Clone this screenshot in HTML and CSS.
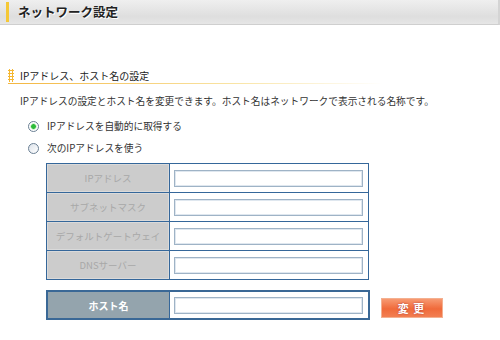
FILE: index.html
```html
<!doctype html>
<html lang="ja">
<head>
    <meta charset="UTF-8">
    <title>ネットワーク設定</title>
    <link rel="stylesheet" href="styles.css">
</head>
<body>
    <div class="page-header">
        <h1 class="page-title">ネットワーク設定</h1>
    </div>

    <div class="content">
        <h2 class="section-title"><span class="dots"></span>IPアドレス、ホスト名の設定</h2>
        <p class="desc">IPアドレスの設定とホスト名を変更できます。ホスト名はネットワークで表示される名称です。</p>

        <div class="radios">
            <label class="radio-row"><input type="radio" name="mode" checked> IPアドレスを自動的に取得する</label>
            <label class="radio-row"><input type="radio" name="mode"> 次のIPアドレスを使う</label>
        </div>

        <table class="ip-table">
            <tr><th>IPアドレス</th><td><input type="text" class="field"></td></tr>
            <tr><th>サブネットマスク</th><td><input type="text" class="field"></td></tr>
            <tr><th>デフォルトゲートウェイ</th><td><input type="text" class="field"></td></tr>
            <tr><th>DNSサーバー</th><td><input type="text" class="field"></td></tr>
        </table>

        <div class="host-row">
            <table class="host-table">
                <tr><th>ホスト名</th><td><input type="text" class="field"></td></tr>
            </table>
            <button type="button" class="change-btn">変 更</button>
        </div>
    </div>
</body>
</html>
```

FILE: styles.css
```css
body {
    margin: 0;
    width: 500px;
    font-family: "Noto Sans CJK JP", "Liberation Sans", sans-serif;
    color: #333;
    background: #fff;
}
.page-header {
    height: 24px;
    background: linear-gradient(#efefef, #dedede 70%, #e6e6e6);
    border-bottom: 1px solid #cfcfcf;
    border-right: 2px solid #d4d4d4;
    box-sizing: content-box;
    width: 498px;
    display: flex;
    align-items: center;
}
.page-title {
    margin: 0 0 0 6px;
    padding-left: 9px;
    border-left: 3px solid #f5c836;
    height: 20px;
    line-height: 20px;
    font-size: 12.5px;
    font-weight: bold;
    color: #222;
    text-shadow: 1px 1px 0 #fff;
}
.content {
    padding-top: 42px;
}
.section-title {
    margin: 0 0 0 8px;
    width: 374px;
    height: 16px;
    display: flex;
    align-items: center;
    font-size: 10px;
    font-weight: normal;
    color: #222;
    border-bottom: 1px solid;
    border-image: linear-gradient(to right, #f3b640, #f9e4a4 60%, #fff) 1;
}
.dots {
    width: 6px;
    height: 13px;
    margin-right: 6px;
    background-image: radial-gradient(circle, #f5b731 1px, transparent 1.2px);
    background-size: 3px 3px;
}
.desc {
    margin: 9px 0 0 20px;
    font-size: 9.7px;
    line-height: 16px;
    color: #333;
}
.radios {
    margin: 6px 0 0 28px;
}
.radio-row {
    display: flex;
    align-items: center;
    height: 22px;
    font-size: 9.7px;
    color: #333;
}
.radio-row input {
    appearance: none;
    margin: 0 8px 0 0;
    width: 11px;
    height: 11px;
    border: 1px solid #6a7f94;
    border-radius: 50%;
    background: linear-gradient(135deg, #dde3ea, #fff);
}
.radio-row input:checked {
    background: radial-gradient(circle, #2dbb3a 2px, #b9e9b5 2.6px, #fff 3.6px);
}
.ip-table, .host-table {
    border-collapse: collapse;
    margin-left: 46px;
}
.ip-table {
    margin-top: 4px;
}
.ip-table th, .ip-table td, .host-table th, .host-table td {
    border: 1px solid #35679a;
    height: 28px;
    padding: 0;
}
.host-table th, .host-table td {
    height: 26px;
}
.ip-table th {
    width: 122px;
    background: #cccccc;
    box-shadow: inset 0 0 0 1px #dadada;
    font-size: 9.5px;
    font-weight: normal;
    color: #a8a8a8;
}
.ip-table td, .host-table td {
    width: 199px;
    padding-left: 4px;
    box-sizing: border-box;
}
.field {
    display: block;
    width: 189px;
    height: 17px;
    box-sizing: border-box;
    border: 1px solid #9fb3c6;
    box-shadow: inset 0 0 0 1px #dfe7ef;
    background: #fff;
    margin: 0;
}
.host-row {
    display: flex;
    align-items: center;
    margin-top: 10px;
}
.host-table {
    border: 2px solid #3a6896;
}
.host-table th {
    width: 121px;
    background: #94a4ad;
    font-size: 10px;
    font-weight: bold;
    color: #fff;
}
.change-btn {
    margin-left: 11px;
    width: 62px;
    height: 20px;
    border: 1px solid #f4b090;
    background: linear-gradient(#f79a72, #f06a3a 55%, #f27f52);
    color: #fff;
    font-family: inherit;
    font-size: 11px;
    font-weight: bold;
    letter-spacing: 1px;
    text-shadow: 0 0 2px #a33;
    padding: 0;
    margin-top: 6px;
}
```
